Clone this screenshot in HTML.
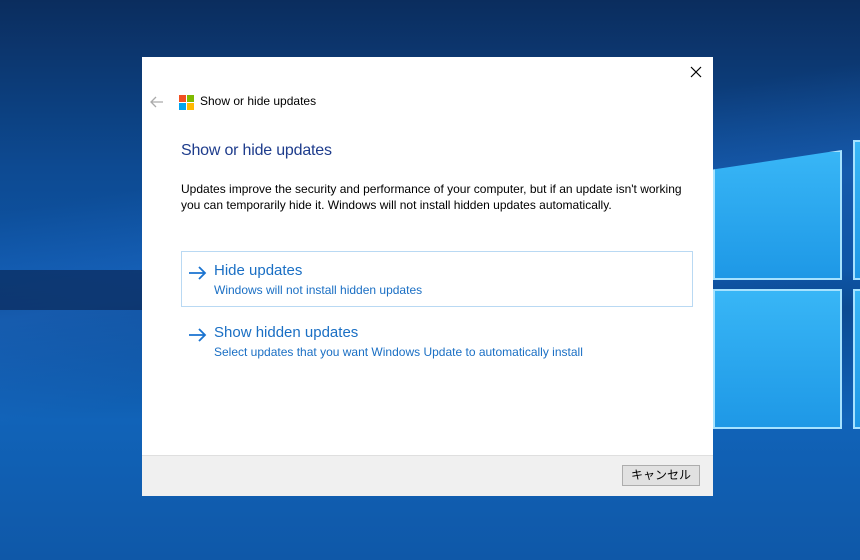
<!DOCTYPE html>
<html><head><meta charset="utf-8"><style>
*{margin:0;padding:0;box-sizing:border-box}
body{width:860px;height:560px;overflow:hidden;position:relative;font-family:"Segoe UI","Liberation Sans","Noto Sans CJK JP",sans-serif;
background:linear-gradient(180deg,#0b2d5e 0%,#0d4a92 30%,#0e55a6 48%,#0c4a92 55%,#1163b8 75%,#0f58a8 100%);}
.beam{position:absolute;left:0;top:0;width:860px;height:560px;background:linear-gradient(170deg,rgba(0,0,0,0) 30%,rgba(40,120,220,.35) 45%,rgba(0,0,0,0) 60%)}
.band{position:absolute;left:0;top:270px;width:142px;height:40px;background:#0a2a5a;opacity:.7}
.pane{position:absolute;background:linear-gradient(180deg,#38b6f6,#1e98e6);border:2px solid #a6e2ff}
.dlg{position:absolute;left:142px;top:57px;width:571px;height:439px;background:#fff}
.foot{position:absolute;left:0;bottom:0;width:571px;height:41px;background:#f0f0f0;border-top:1px solid #dfdfdf}
.btn{position:absolute;left:480px;top:9px;width:78px;height:21px;background:#e1e1e1;border:1px solid #adadad;font-size:12px;text-align:center;line-height:19px;color:#000}
.t{position:absolute;white-space:nowrap}
</style></head><body>
<div class="beam"></div>
<div class="band"></div>
<div class="pane" style="left:713px;top:150px;width:129px;height:130px;clip-path:polygon(0 15%,100% 0,100% 100%,0 100%)"></div>
<div class="pane" style="left:853px;top:140px;width:20px;height:140px"></div>
<div class="pane" style="left:713px;top:289px;width:129px;height:140px"></div>
<div class="pane" style="left:853px;top:289px;width:20px;height:140px"></div>
<div class="dlg">
 <svg class="t" style="left:548px;top:9px" width="12" height="12" viewBox="0 0 12 12"><path d="M1 1L11 11M11 1L1 11" stroke="#000" stroke-width="1.2"/></svg>
 <svg class="t" style="left:8px;top:39px" width="14" height="12" viewBox="0 0 14 12"><path d="M13 6H1M6 1L1 6L6 11" stroke="#aaa" stroke-width="1.3" fill="none"/></svg>
 <div class="t" style="left:37px;top:38px;width:7px;height:7px;background:#f25022"></div>
 <div class="t" style="left:45px;top:38px;width:7px;height:7px;background:#7fba00"></div>
 <div class="t" style="left:37px;top:46px;width:7px;height:7px;background:#00a4ef"></div>
 <div class="t" style="left:45px;top:46px;width:7px;height:7px;background:#ffb900"></div>
 <div class="t" style="left:58px;top:37px;font-size:12px;color:#000">Show or hide updates</div>
 <div class="t" style="left:39px;top:85px;font-size:16px;color:#1e3c8c;letter-spacing:-0.2px">Show or hide updates</div>
 <div class="t" style="left:39px;top:124px;font-size:12px;line-height:16px;color:#000">Updates improve the security and performance of your computer, but if an update isn't working<br>you can temporarily hide it. Windows will not install hidden updates automatically.</div>
 <div class="t" style="left:39px;top:194px;width:512px;height:56px;border:1px solid #b9d9f3"></div>
 <svg class="t" style="left:46px;top:209px" width="19" height="14" viewBox="0 0 19 14"><path d="M1 7H17M11 1L17 7L11 13" stroke="#1a73d0" stroke-width="1.8" fill="none"/></svg>
 <div class="t" style="left:72px;top:205px;font-size:15px;color:#1a6fc4">Hide updates</div>
 <div class="t" style="left:72px;top:226px;font-size:12px;color:#1a6fc4">Windows will not install hidden updates</div>
 <svg class="t" style="left:46px;top:271px" width="19" height="14" viewBox="0 0 19 14"><path d="M1 7H17M11 1L17 7L11 13" stroke="#1a73d0" stroke-width="1.8" fill="none"/></svg>
 <div class="t" style="left:72px;top:267px;font-size:15px;color:#1a6fc4">Show hidden updates</div>
 <div class="t" style="left:72px;top:288px;font-size:12px;color:#1a6fc4">Select updates that you want Windows Update to automatically install</div>
 <div class="foot"><div class="btn">キャンセル</div></div>
</div>
</body></html>
